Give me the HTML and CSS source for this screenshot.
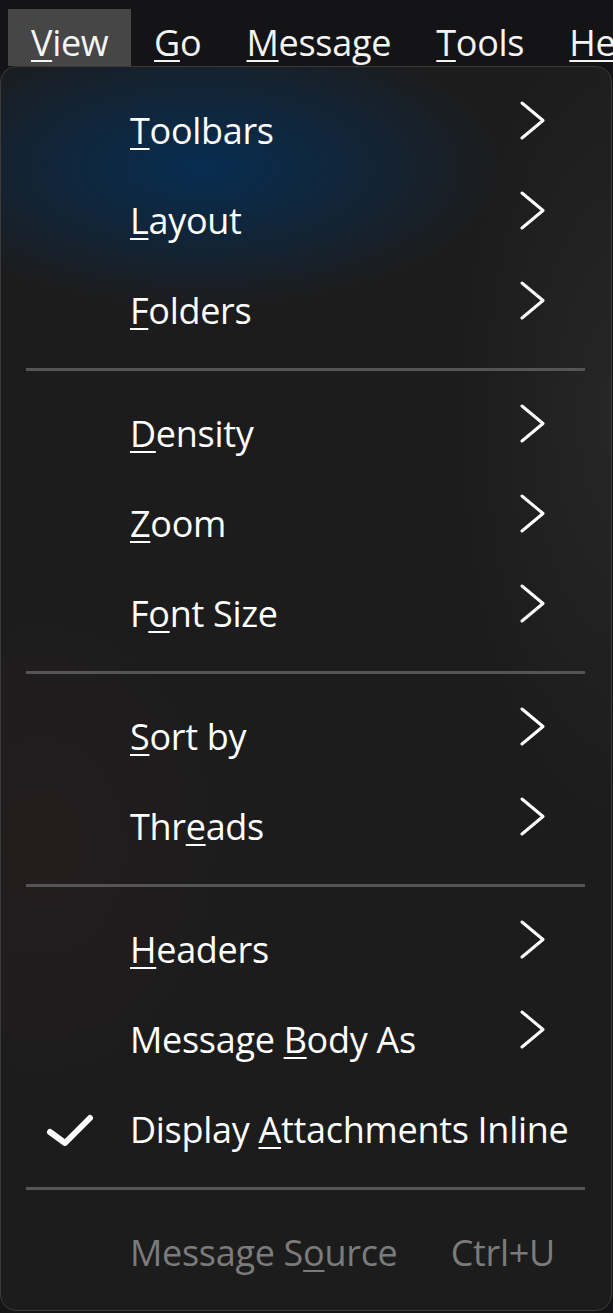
FILE: index.html
```html
<!DOCTYPE html>
<html lang="en">
<head>
<meta charset="utf-8">
<title>View menu</title>
<link rel="stylesheet" href="styles.css">
</head>
<body>
<nav class="menubar">
  <span class="mb-item active"><u>V</u>iew</span>
  <span class="mb-item"><u>G</u>o</span>
  <span class="mb-item"><u>M</u>essage</span>
  <span class="mb-item"><u>T</u>ools</span>
  <span class="mb-item"><u>He</u>lp</span>
</nav>
<div class="menu">
  <div class="item"><span class="check"></span><span class="label"><u>T</u>oolbars</span><svg class="chev" viewBox="0 0 36 40"><polyline points="3,2 24,19.5 3,37"/></svg></div>
  <div class="item"><span class="check"></span><span class="label"><u>L</u>ayout</span><svg class="chev" viewBox="0 0 36 40"><polyline points="3,2 24,19.5 3,37"/></svg></div>
  <div class="item"><span class="check"></span><span class="label"><u>F</u>olders</span><svg class="chev" viewBox="0 0 36 40"><polyline points="3,2 24,19.5 3,37"/></svg></div>
  <div class="sep"></div>
  <div class="item"><span class="check"></span><span class="label"><u>D</u>ensity</span><svg class="chev" viewBox="0 0 36 40"><polyline points="3,2 24,19.5 3,37"/></svg></div>
  <div class="item"><span class="check"></span><span class="label"><u>Z</u>oom</span><svg class="chev" viewBox="0 0 36 40"><polyline points="3,2 24,19.5 3,37"/></svg></div>
  <div class="item"><span class="check"></span><span class="label">F<u>o</u>nt Size</span><svg class="chev" viewBox="0 0 36 40"><polyline points="3,2 24,19.5 3,37"/></svg></div>
  <div class="sep"></div>
  <div class="item"><span class="check"></span><span class="label"><u>S</u>ort by</span><svg class="chev" viewBox="0 0 36 40"><polyline points="3,2 24,19.5 3,37"/></svg></div>
  <div class="item"><span class="check"></span><span class="label">Thr<u>e</u>ads</span><svg class="chev" viewBox="0 0 36 40"><polyline points="3,2 24,19.5 3,37"/></svg></div>
  <div class="sep"></div>
  <div class="item"><span class="check"></span><span class="label"><u>H</u>eaders</span><svg class="chev" viewBox="0 0 36 40"><polyline points="3,2 24,19.5 3,37"/></svg></div>
  <div class="item"><span class="check"></span><span class="label">Message <u>B</u>ody As</span><svg class="chev" viewBox="0 0 36 40"><polyline points="3,2 24,19.5 3,37"/></svg></div>
  <div class="item"><span class="check"><svg class="tick" viewBox="0 0 48 40"><polyline points="4,22 19,33 44,8"/></svg></span><span class="label">Display <u>A</u>ttachments Inline</span><span class="shortcut"></span></div>
  <div class="sep"></div>
  <div class="item disabled"><span class="check"></span><span class="label">Message S<u>o</u>urce</span><span class="shortcut">Ctrl+U</span></div>
</div>
</body>
</html>
```

FILE: styles.css
```css
html, body {
  margin: 0;
  padding: 0;
}
body {
  background: #141417;
  font-family: "Open Sans", "Noto Sans", sans-serif;
  font-size: 36px;
  letter-spacing: -0.3px;
  color: #ffffff;
  width: 613px;
  height: 1313px;
  overflow: hidden;
}
u {
  text-decoration: underline;
  text-decoration-thickness: 2px;
  text-underline-offset: 4px;
}
.menubar {
  display: flex;
  padding: 9px 0 0 8px;
  height: 57px;
  white-space: nowrap;
  overflow: hidden;
}
.mb-item {
  height: 57px;
  line-height: 68px;
  padding: 0 22.6px;
  color: #f4f4f4;
}
.mb-item.active {
  background: #464646;
  padding: 0 23px;
}
.menu {
  width: 612px;
  box-sizing: border-box;
  height: 1245px;
  border: 1px solid #3a3a3a;
  border-radius: 16px;
  padding: 19px 0 12px;
  background:
    radial-gradient(ellipse 300px 140px at 200px 100px, rgba(6, 46, 84, 0.95), rgba(6, 46, 84, 0.5) 50%, rgba(6, 46, 84, 0) 100%),
    radial-gradient(ellipse 200px 260px at 40px 780px, rgba(60, 32, 32, 0.25), rgba(60, 32, 32, 0) 100%),
    radial-gradient(ellipse 160px 400px at 620px 350px, rgba(70, 70, 70, 0.25), rgba(70, 70, 70, 0) 100%),
    #1c1c1d;
}
.item {
  display: grid;
  grid-template-columns: 129px 1fr auto;
  align-items: center;
  height: 90px;
  line-height: 90px;
  padding-right: 56px;
  white-space: nowrap;
}
.check {
  position: relative;
  height: 90px;
}
.tick {
  position: absolute;
  left: 45px;
  top: 25px;
  width: 48px;
  height: 40px;
  fill: none;
  stroke: #ffffff;
  stroke-width: 6;
  stroke-linecap: round;
  stroke-linejoin: round;
}
.chev {
  width: 36px;
  height: 40px;
  margin-bottom: 20px;
  fill: none;
  stroke: #ffffff;
  stroke-width: 3;
  stroke-linecap: round;
  stroke-linejoin: round;
}
.disabled {
  color: #7b7b7b;
}
.shortcut {
  color: #7b7b7b;
}
.sep {
  height: 3px;
  margin: 12px 26px 18px 25px;
  background: #555555;
}
```
